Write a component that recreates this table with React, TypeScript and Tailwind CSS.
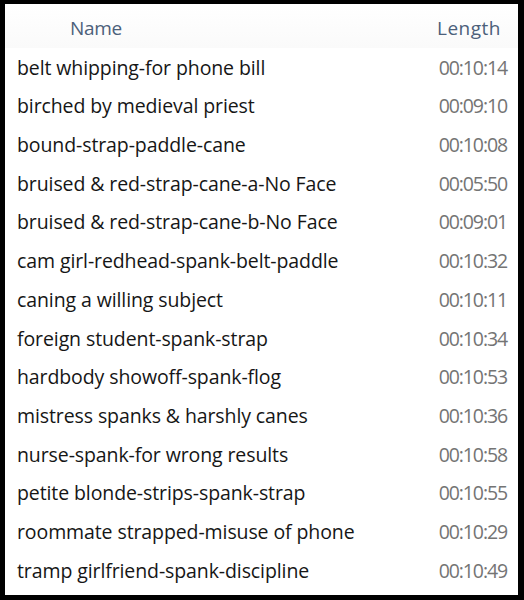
import React from "react";

const rows: [string, string][] = [
  ["belt whipping-for phone bill", "00:10:14"],
  ["birched by medieval priest", "00:09:10"],
  ["bound-strap-paddle-cane", "00:10:08"],
  ["bruised & red-strap-cane-a-No Face", "00:05:50"],
  ["bruised & red-strap-cane-b-No Face", "00:09:01"],
  ["cam girl-redhead-spank-belt-paddle", "00:10:32"],
  ["caning a willing subject", "00:10:11"],
  ["foreign student-spank-strap", "00:10:34"],
  ["hardbody showoff-spank-flog", "00:10:53"],
  ["mistress spanks & harshly canes", "00:10:36"],
  ["nurse-spank-for wrong results", "00:10:58"],
  ["petite blonde-strips-spank-strap", "00:10:55"],
  ["roommate strapped-misuse of phone", "00:10:29"],
  ["tramp girlfriend-spank-discipline", "00:10:49"],
];

export default function App() {
  return (
    <div
      className="w-[524px] h-[600px] bg-black pt-[4px] pl-[5px] pr-[6px] pb-[5px]"
      style={{ fontFamily: '"Open Sans", "Noto Sans", sans-serif' }}
    >
      <div className="w-full h-full bg-white flex flex-col">
        <div className="h-[44px] pt-[4px] flex items-center bg-gradient-to-b from-white to-[#fafafa]">
          <div className="w-[174px] text-center text-[19px] text-[#4c607a] pl-[8px] tracking-[-0.3px]">Name</div>
          <div className="flex-1" />
          <div className="pr-[17px] text-[19px] text-[#4c607a] tracking-[0.5px]">Length</div>
        </div>
        <div className="flex flex-col">
          {rows.map(([n, l]) => (
            <div key={n} className="h-[38.7px] flex items-center justify-between pl-[12px] pr-[11px]">
              <span className="text-[19.5px] text-[#161616] tracking-[-0.1px]">{n}</span>
              <span className="text-[19.5px] text-[#747474] tracking-[-1.1px]">{l}</span>
            </div>
          ))}
        </div>
      </div>
    </div>
  );
}
